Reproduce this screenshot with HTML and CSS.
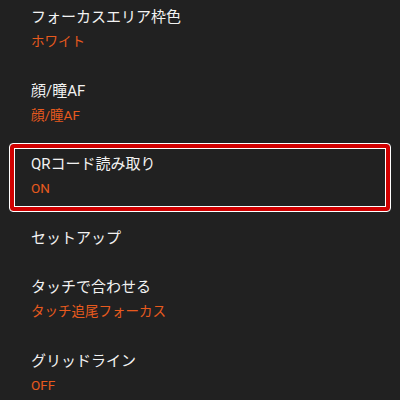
FILE: index.html
```html
<!DOCTYPE html>
<html lang="ja">
<head>
<meta charset="utf-8">
<link rel="stylesheet" href="styles.css">
</head>
<body>
<div class="list">
  <div class="row">
    <div class="title">フォーカスエリア枠色</div>
    <div class="value">ホワイト</div>
  </div>
  <div class="row">
    <div class="title">顔/瞳AF</div>
    <div class="value">顔/瞳AF</div>
  </div>
  <div class="row selected">
    <div class="title">QRコード読み取り</div>
    <div class="value">ON</div>
  </div>
  <div class="row">
    <div class="title">セットアップ</div>
  </div>
  <div class="row">
    <div class="title">タッチで合わせる</div>
    <div class="value">タッチ追尾フォーカス</div>
  </div>
  <div class="row">
    <div class="title">グリッドライン</div>
    <div class="value">OFF</div>
  </div>
</div>
</body>
</html>
```
FILE: styles.css
```css
html, body {
  margin: 0;
  padding: 0;
  background: #212121;
  height: 100%;
  overflow: hidden;
}
body {
  font-family: Roboto, "Noto Sans CJK JP", sans-serif;
}
.list {
  display: flex;
  flex-direction: column;
  margin-top: -7.75px;
}
.row {
  padding: 12.75px 0 12.75px 31px;
}
.title {
  color: #f2f2f2;
  font-size: 15px;
  line-height: 24px;
}
.value {
  color: #e85a1e;
  font-size: 13.5px;
  line-height: 24px;
  font-weight: 400;
}
.row.selected {
  margin: 4px 9px 0.75px 9px;
  padding: 8px 0 11px 21px;
  border: 1px solid #ffffff;
  border-radius: 4px;
  box-shadow: inset 0 0 0 4px #d00000, inset 0 0 0 5px #ffffff;
}
```
